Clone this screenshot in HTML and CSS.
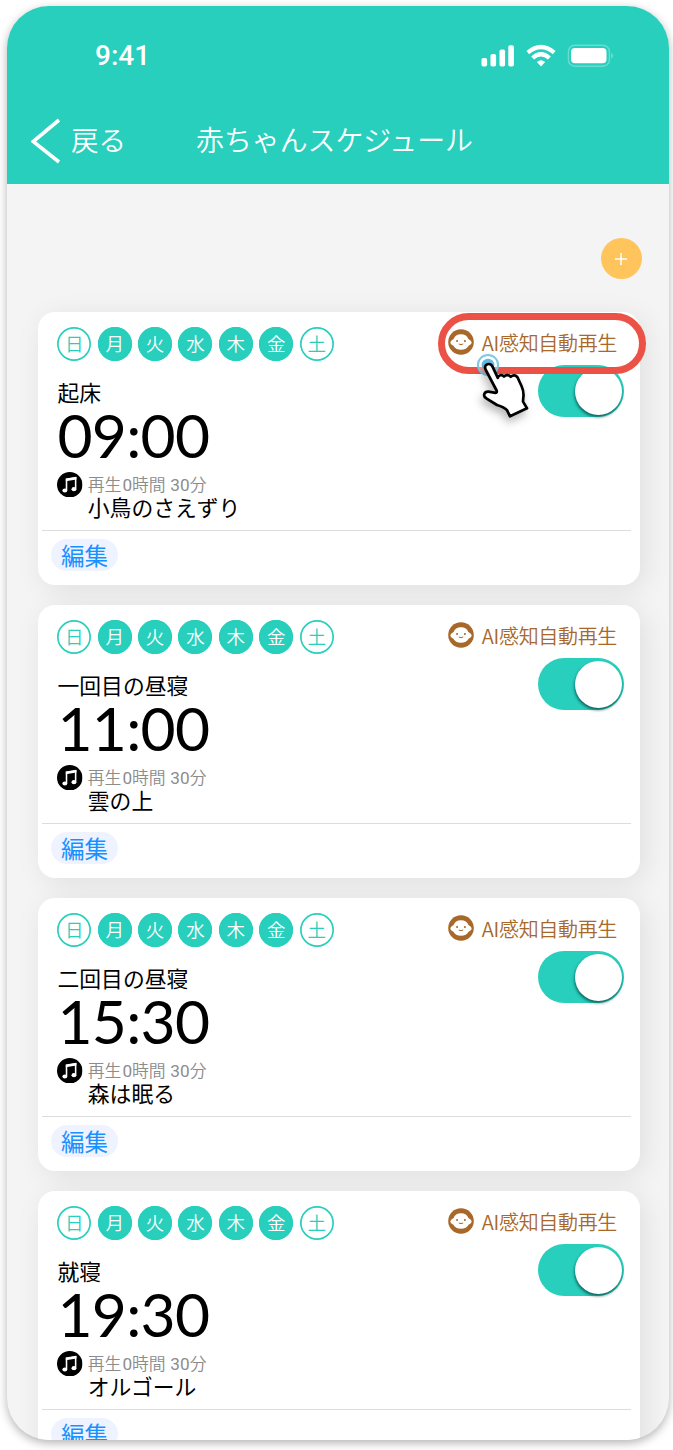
FILE: index.html
```html
<!DOCTYPE html>
<html lang="ja">
<head>
<meta charset="utf-8">
<title>赤ちゃんスケジュール</title>
<link rel="stylesheet" href="styles.css">
</head>
<body>
<svg width="0" height="0" class="defs">
  <symbol id="face" viewBox="0 0 26 26">
    <circle cx="13" cy="13" r="12.8" fill="#a8682a"/>
    <path d="M13 5.2C9.2 5.2 6.6 7 5.6 9.9C4.2 10.7 2.4 12.2 2.4 13.5C2.4 14.8 3.6 15.9 5.2 16.5C6.6 19.3 9.4 20.8 13 20.8C16.6 20.8 19.4 19.3 20.8 16.5C22.4 15.9 23.6 14.8 23.6 13.5C23.6 12.2 21.8 10.7 20.4 9.9C19.4 7 16.8 5.2 13 5.2Z" fill="#fff"/>
    <circle cx="9.1" cy="12" r="1.05" fill="#a8682a"/><circle cx="16.9" cy="12" r="1.05" fill="#a8682a"/>
    <path d="M10.8 15Q13 16.2 15.2 15" fill="none" stroke="#a8682a" stroke-width="1"/>
  </symbol>
  <symbol id="note" viewBox="0 0 26 26">
    <circle cx="13" cy="13" r="13"/>
    <path d="M9.7 18.5V7.4L19 5.8V17" fill="none" stroke="#fff" stroke-width="1.6"/>
    <path d="M9 6.8L19.8 5V7.6L9 9.4Z" fill="#fff"/>
    <ellipse cx="8" cy="18.8" rx="2.5" ry="2.1" fill="#fff"/><ellipse cx="17.3" cy="17.5" rx="2.5" ry="2.1" fill="#fff"/>
  </symbol>
</svg>
<div class="phone">
  <header class="header">
    <div class="status">
      <span class="clock">9:41</span>
      <svg class="status-icons" width="134" height="24" viewBox="0 0 134 24" fill="#fff">
        <rect x="0.5" y="14" width="5.6" height="8.6" rx="1.8"/><rect x="9.5" y="10" width="5.6" height="12.6" rx="1.8"/><rect x="18.5" y="5.5" width="5.6" height="17.1" rx="1.8"/><rect x="27.3" y="1.3" width="5.6" height="21.3" rx="1.8"/>
        <g fill="none" stroke="#fff" stroke-width="4.3"><path d="M46.8 8.6Q60 -2.8 73.2 8.6"/><path d="M51.6 14Q60 6.6 68.4 14"/></g>
        <path d="M55.8 17.9Q60 14.4 64.2 17.9L60 22.6Z"/>
        <rect x="87.4" y="1.2" width="41" height="21" rx="6.5" fill="none" stroke="#fff" stroke-opacity=".3" stroke-width="1.4"/>
        <rect x="90" y="4" width="35.5" height="15.3" rx="4"/><path d="M130.3 8.5Q133.4 11.8 130.3 15Z" opacity=".4"/>
      </svg>
    </div>
    <div class="nav">
      <svg class="chevron" width="30" height="46" viewBox="0 0 30 46"><path d="M28 2L2.2 23.5L28 44" fill="none" stroke="#fff" stroke-width="3.6"/></svg>
      <span class="back">戻る</span>
      <span class="title">赤ちゃんスケジュール</span>
    </div>
  </header>
  <div class="toolbar"><div class="add"><svg width="14" height="14" viewBox="0 0 14 14"><path d="M7 1V13M1 7H13" stroke="#fff" stroke-width="1.5"/></svg></div></div>
  <main class="list">
    <section class="card">
      <div class="top">
        <div class="days"><i>日</i><i class="on">月</i><i class="on">火</i><i class="on">水</i><i class="on">木</i><i class="on">金</i><i>土</i></div>
        <div class="ai"><svg><use href="#face"/></svg><span>AI感知自動再生</span></div>
      </div>
      <div class="mid"><div><div class="name">起床</div><div class="time">09:00</div></div><div class="toggle"><b></b></div></div>
      <div class="sound"><svg><use href="#note"/></svg><div><div class="length">再生<span class="num">0</span>時間 <span class="num">30</span>分</div><div class="song">小鳥のさえずり</div></div></div>
      <div class="foot"><span class="edit">編集</span></div>
      <div class="highlight"></div>
      <svg class="pointer" width="60" height="72" viewBox="0 0 60 72">
        <circle cx="18" cy="13" r="10.1" fill="#fff" fill-opacity=".4" stroke="#80c8e3" stroke-width="2"/>
        <circle cx="18" cy="13" r="6.3" fill="#65b9df"/>
        <path class="hand" d="M15.8 18C14.2 14.8 15.5 12.8 17.5 12.2C19.8 11.6 21.6 12.5 22.5 14.7L27.8 25.8C28.5 23.2 31.6 22.2 34 24.5C35.8 22.6 38.8 22.6 40.8 24.8C43 22.8 46 22.8 47.6 25.5L51.5 34C53.6 38.5 53.9 42.5 53.2 46.5L53 49.6L57 56.3L40 64.3L37 58.2C34.3 55.2 31 54.2 27 53L16.3 46.3C12.5 44.2 14 39.3 18.5 39.6L25.5 40.8C27 40.8 27 39.5 26.6 38.5Z" fill="#fff" stroke="#000" stroke-width="2.7" stroke-linejoin="round"/>
      </svg>
    </section>
    <section class="card">
      <div class="top">
        <div class="days"><i>日</i><i class="on">月</i><i class="on">火</i><i class="on">水</i><i class="on">木</i><i class="on">金</i><i>土</i></div>
        <div class="ai"><svg><use href="#face"/></svg><span>AI感知自動再生</span></div>
      </div>
      <div class="mid"><div><div class="name">一回目の昼寝</div><div class="time">11:00</div></div><div class="toggle"><b></b></div></div>
      <div class="sound"><svg><use href="#note"/></svg><div><div class="length">再生<span class="num">0</span>時間 <span class="num">30</span>分</div><div class="song">雲の上</div></div></div>
      <div class="foot"><span class="edit">編集</span></div>
    </section>
    <section class="card">
      <div class="top">
        <div class="days"><i>日</i><i class="on">月</i><i class="on">火</i><i class="on">水</i><i class="on">木</i><i class="on">金</i><i>土</i></div>
        <div class="ai"><svg><use href="#face"/></svg><span>AI感知自動再生</span></div>
      </div>
      <div class="mid"><div><div class="name">二回目の昼寝</div><div class="time">15:30</div></div><div class="toggle"><b></b></div></div>
      <div class="sound"><svg><use href="#note"/></svg><div><div class="length">再生<span class="num">0</span>時間 <span class="num">30</span>分</div><div class="song">森は眠る</div></div></div>
      <div class="foot"><span class="edit">編集</span></div>
    </section>
    <section class="card">
      <div class="top">
        <div class="days"><i>日</i><i class="on">月</i><i class="on">火</i><i class="on">水</i><i class="on">木</i><i class="on">金</i><i>土</i></div>
        <div class="ai"><svg><use href="#face"/></svg><span>AI感知自動再生</span></div>
      </div>
      <div class="mid"><div><div class="name">就寝</div><div class="time">19:30</div></div><div class="toggle"><b></b></div></div>
      <div class="sound"><svg><use href="#note"/></svg><div><div class="length">再生<span class="num">0</span>時間 <span class="num">30</span>分</div><div class="song">オルゴール</div></div></div>
      <div class="foot"><span class="edit">編集</span></div>
    </section>
  </main>
</div>
</body>
</html>
```
FILE: styles.css
```css
* { box-sizing: border-box; }
body { margin: 0; height: 1450px; overflow: hidden; background: #fff; padding: 6px 0 0 7px; font-family: "Noto Sans CJK JP", sans-serif; font-weight: 400; }
svg { display: block; flex: none; }
.defs { position: absolute; }
.phone { width: 661.5px; height: 1434px; border-radius: 42px; background: #f4f4f4; overflow: hidden; box-shadow: 0 3px 10px rgba(0,0,0,.3); }
.header { height: 178px; background: #27cfbc; color: #fff; }
.status { display: flex; align-items: center; justify-content: space-between; height: 100px; padding: 0 53.5px 0 88px; }
.clock { font: 500 28px/32px Roboto, sans-serif; letter-spacing: 0; }
.nav { display: flex; align-items: center; height: 70px; padding-left: 24px; }
.back { margin-left: 10px; margin-top: -4px; font-weight: 350; font-size: 27.6px; line-height: 40px; width: 125px; }
.title { font-weight: 350; font-size: 27.9px; line-height: 40px; margin-top: -4px; }
.toolbar { height: 128px; padding: 54px 27px 0 0; display: flex; justify-content: flex-end; }
.add { width: 41px; height: 41px; border-radius: 50%; background: #ffc45c; display: flex; align-items: center; justify-content: center; }
.list { padding: 0 28.5px 0 30.5px; display: flex; flex-direction: column; gap: 20px; }
.card { position: relative; flex: none; height: 273px; border-radius: 17px; background: #fff; box-shadow: 5px 5px 28px rgba(0,0,0,.085); padding: 15.3px 9px 0 4.5px; }
.top { display: flex; justify-content: space-between; height: 50px; padding: 0 14px 0 15.3px; }
.days { display: flex; gap: 6.4px; }
.days i { width: 34px; height: 34px; border-radius: 50%; box-shadow: inset 0 0 0 1.7px #27cfbc; color: #27cfbc; font-style: normal; font-weight: 350; font-size: 18.5px; line-height: 33px; text-align: center; }
.days .on { background: #27cfbc; color: #fff; }
.ai { display: flex; gap: 8px; align-items: center; height: 32px; color: #a8682a; font-weight: 350; font-size: 20px; line-height: 32px; letter-spacing: -.33px; }
.ai svg { width: 26px; height: 26px; margin-top: -2px; }
.mid { display: flex; justify-content: space-between; height: 94px; padding: 0 6.7px 0 15.5px; }
.name { font-size: 21.8px; line-height: 30px; height: 30px; }
.time { font: 400 60.5px/60px Lato, sans-serif; letter-spacing: -.75px; margin-top: -2px; }
.toggle { width: 86px; height: 52px; margin-top: -12px; border-radius: 26px; background: #27cfbc; padding: 2.3px; display: flex; justify-content: flex-end; }
.toggle b { width: 47.5px; height: 47.5px; border-radius: 50%; background: #fff; box-shadow: -.5px 2px 3px rgba(0,60,60,.75); }
.sound { display: flex; gap: 5.3px; padding-left: 15px; height: 58.7px; }
.sound svg { width: 25.5px; height: 25.5px; margin-top: .5px; }
.length { font-size: 16.8px; line-height: 26px; height: 24px; color: #8c8c8c; font-weight: 350; }
.num { font-family: Roboto, sans-serif; font-weight: 400; font-size: 17.2px; margin-left: 1px; }
.song { font-size: 21.8px; line-height: 24px; }
.foot { border-top: 1px solid #ddd; padding: 8.5px 0 0 9px; }
.edit { display: block; width: 67px; height: 32px; border-radius: 16px; background: #eef3ff; color: #1990ff; font-size: 23.5px; line-height: 33px; text-align: center; }
.highlight { position: absolute; left: 400.5px; top: 1px; width: 208px; height: 61px; border: 7px solid #ec5145; border-radius: 31px; }
.pointer { position: absolute; left: 432.5px; top: 40px; overflow: visible; }
.hand { filter: drop-shadow(-2px 5px 4px rgba(0,0,0,.28)); }
```
